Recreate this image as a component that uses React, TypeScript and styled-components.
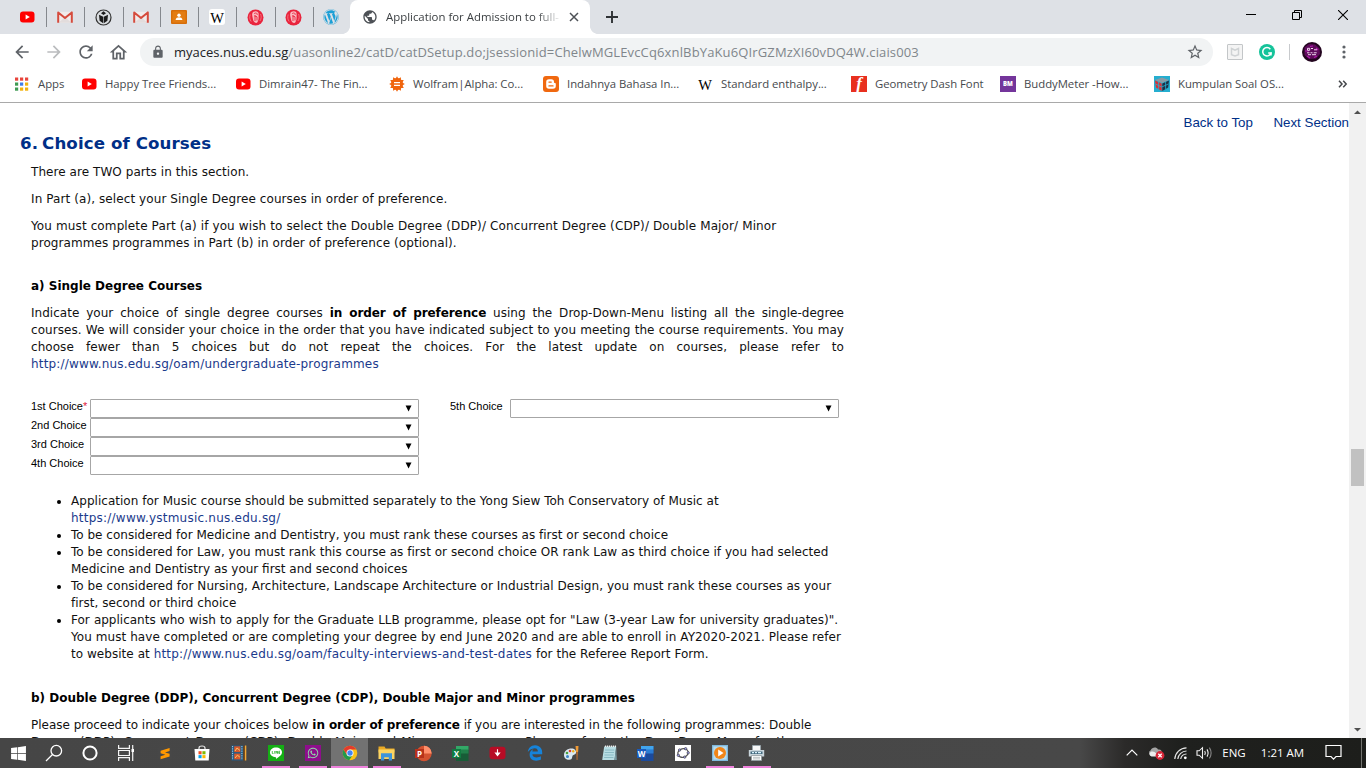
import React from 'react';
import styled, { createGlobalStyle, css } from 'styled-components';
import { MdArrowBack, MdArrowForward, MdRefresh, MdOutlineHome, MdLock, MdStarBorder, MdPublic } from 'react-icons/md';
import { FaWordpress, FaWhatsapp, FaWindows } from 'react-icons/fa';
import { FaEdgeLegacy } from 'react-icons/fa6';

const GlobalStyle = createGlobalStyle`
  html, body { margin: 0; padding: 0; background: #fff; overflow: hidden; }
  * { box-sizing: border-box; }
`;

const ui = '"Segoe UI", "Open Sans", sans-serif';

const Screen = styled.div`
  width: 1366px;
  height: 768px;
  display: flex;
  flex-direction: column;
  overflow: hidden;
  font-family: ${ui};
`;

/* ---------- browser chrome ---------- */

const TabStrip = styled.div`
  height: 34px;
  flex: none;
  display: flex;
  padding-left: 8px;
  background: #dee1e6;
`;

const PinnedTab = styled.div<{ $last?: boolean }>`
  width: 38px;
  height: 34px;
  display: flex;
  align-items: center;
  justify-content: center;
  &::after {
    content: '';
    width: 1px;
    height: 20px;
    margin-left: 11px;
    margin-right: -2px;
    background: ${p => (p.$last ? 'transparent' : '#85888d')};
  }
  svg { flex: none; margin-left: 10px; }
`;

const ActiveTab = styled.div`
  width: 240px;
  height: 34px;
  display: flex;
  align-items: center;
  padding-left: 12px;
  background: #fff;
  border-radius: 8px 8px 0 0;
`;

const TabFlare = styled.div<{ $side: 'left' | 'right' }>`
  width: 8px;
  height: 8px;
  align-self: flex-end;
  margin-left: ${p => (p.$side === 'left' ? '-8px' : '0')};
  background: radial-gradient(circle at ${p => (p.$side === 'left' ? '0 0' : '100% 0')}, transparent 7.6px, #fff 8.2px);
`;

const TabTitle = styled.div`
  width: 174px;
  margin-left: 8px;
  margin-right: 5px;
  white-space: nowrap;
  font-size: 11.4px;
  line-height: 18px;
  color: #3c4043;
  mask-image: linear-gradient(to right, #000 150px, transparent 176px);
`;

const NewTab = styled.div`
  width: 28px;
  display: flex;
  align-items: center;
  justify-content: center;
`;

const WindowControls = styled.div`
  display: flex;
  height: 29px;
  margin-left: auto;
`;

const WindowButton = styled.div`
  width: 46px;
  display: flex;
  align-items: center;
  justify-content: center;
`;

const Toolbar = styled.div`
  height: 37px;
  flex: none;
  display: flex;
  align-items: center;
  padding: 0 0 1px 6px;
  background: #fff;
  color: #5f6368;
`;

const ToolButton = styled.div<{ $w: number; $color?: string }>`
  width: ${p => p.$w}px;
  height: 28px;
  flex: none;
  display: flex;
  align-items: center;
  justify-content: center;
  color: ${p => p.$color ?? '#5f6368'};
`;

const AddressBar = styled.div`
  width: 1073px;
  height: 28px;
  flex: none;
  display: flex;
  align-items: center;
  padding: 0 9px 0 11px;
  margin-left: 6px;
  background: #f1f3f4;
  border-radius: 14px;
`;

const Url = styled.div`
  flex: 1;
  margin-left: 9px;
  font-size: 13px;
  line-height: 20px;
  color: #80868b;
  white-space: nowrap;
  letter-spacing: 0.14px;
`;

const Host = styled.span`
  color: #202124;
  letter-spacing: 0;
`;

const Divider = styled.div`
  width: 1px;
  height: 16px;
  margin: 0 12px 0 7px;
  background: #c8cacd;
`;

const BookmarkBar = styled.div`
  height: 32px;
  flex: none;
  display: flex;
  padding-left: 14px;
  padding-bottom: 6px;
  background: #fff;
  border-bottom: 1px solid #a9a9a9;
`;

const Bookmark = styled.div<{ $w: number }>`
  width: ${p => p.$w}px;
  display: flex;
  align-items: center;
  gap: 8px;
  font-size: 11.35px;
  letter-spacing: -0.03px;
  color: #46494d;
  white-space: nowrap;
  svg { flex: none; }
`;

const Overflow = styled.div`
  margin-left: auto;
  width: 34px;
  display: flex;
  align-items: center;
  padding-left: 1px;
`;

/* ---------- page ---------- */

const Viewport = styled.div`
  flex: 1;
  min-height: 0;
  display: flex;
  background: #fff;
`;

const Page = styled.main`
  flex: 1;
  overflow: hidden;
  font: 12px/17px Verdana, "DejaVu Sans", sans-serif;
  color: #111;
`;

const TopLinks = styled.nav`
  display: flex;
  justify-content: flex-end;
  gap: 20.5px;
  padding-top: 11px;
  font: 13.33px/17px Arial, "Liberation Sans", sans-serif;
  color: #002f87;
`;

const SectionTitle = styled.h2`
  display: flex;
  gap: 4px;
  margin: 3px 0 10px 20px;
  font-size: 16.65px;
  line-height: 20px;
  font-weight: bold;
  letter-spacing: 0.1px;
  color: #002f87;
`;

const Body = styled.div`
  width: 813px;
  margin-left: 31px;
`;

const Paragraph = styled.p`
  margin: 0 0 10px;
`;

const SubTitle = styled.h3`
  margin: 26px 0 10px;
  font-size: 12px;
  line-height: 17px;
  color: #000;
`;

const Line = styled.span<{ $ls?: number; $justify?: number }>`
  display: block;
  white-space: nowrap;
  letter-spacing: ${p => p.$ls ?? 0}px;
  ${p => p.$justify && css`
    width: ${p.$justify}px;
    text-align: justify;
    text-align-last: justify;
  `}
`;

const Strong = styled.b`
  color: #000;
  letter-spacing: -0.08px;
`;

const Link = styled.span<{ $ls?: number }>`
  color: #1b3a8c;
  letter-spacing: ${p => p.$ls ?? 0.17}px;
`;

const Choices = styled.div`
  display: flex;
  gap: 31px;
  margin: 26px 0 17px;
  font: 11px/15px Arial, "Liberation Sans", sans-serif;
  color: #000;
`;

const ChoiceRow = styled.label`
  height: 19px;
  display: flex;
`;

const ChoiceLabel = styled.span<{ $w: number }>`
  width: ${p => p.$w}px;
  white-space: nowrap;
`;

const Required = styled.span`
  color: #e0203c;
`;

const SelectBox = styled.span`
  width: 329px;
  height: 19px;
  display: flex;
  align-items: center;
  justify-content: flex-end;
  padding-right: 6px;
  border: 1px solid #a6a6a6;
  border-radius: 1px;
  background: #fff;
`;

const Notes = styled.ul`
  margin: 0 0 27px;
  padding: 1px 0 0 40px;
`;

const Note = styled.li`
  margin: 0;
  &::marker { color: #000; }
`;

const ScrollBar = styled.div`
  width: 17px;
  display: flex;
  flex-direction: column;
  align-items: center;
  background: #f1f1f1;
`;

const ScrollArrow = styled.div<{ $down?: boolean }>`
  height: 17px;
  display: flex;
  align-items: center;
  margin-top: ${p => (p.$down ? 'auto' : '0')};
`;

const ScrollThumb = styled.div`
  width: 13px;
  height: 37px;
  margin-top: 329px;
  background: #c1c1c1;
`;

/* ---------- taskbar ---------- */

const TaskBar = styled.footer`
  height: 30px;
  flex: none;
  display: flex;
  background: linear-gradient(to right, #464646 0, #484848 1080px, #2b2a29 1125px, #1f201e 1180px, #1d1e1b 100%);
  color: #fff;
`;

const SystemItem = styled.div`
  width: 36px;
  height: 30px;
  display: flex;
  align-items: center;
  justify-content: center;
`;

const TaskItem = styled.div<{ $state?: 'open' | 'active' }>`
  width: 37px;
  height: 30px;
  display: flex;
  align-items: center;
  justify-content: center;
  background:
    linear-gradient(#ee82dc, #ee82dc) center bottom / ${p => (p.$state === 'active' ? '37px' : p.$state ? '28px' : '0')} 2px no-repeat,
    ${p => (p.$state === 'active' ? '#727272' : 'transparent')};
`;

const Apps = styled.div`
  display: flex;
  margin-left: 2px;
`;

const Tray = styled.div`
  flex: 1;
  display: flex;
  align-items: center;
  padding-left: 353px;
  margin-left: -7px;
  padding-bottom: 1px;
  font-size: 11.5px;
`;

const TrayItem = styled.div<{ $w: number }>`
  width: ${p => p.$w}px;
  height: 28px;
  display: flex;
  align-items: center;
  justify-content: center;
  white-space: nowrap;
`;

const ShowDesktop = styled.div`
  width: 5px;
  height: 30px;
  border-left: 1px solid #72736f;
`;

/* ---------- icons ---------- */

const YouTube = () => (
  <svg width="16" height="16" viewBox="0 0 16 16">
    <rect x="1" y="2.6" width="14.5" height="11" rx="3" fill="#f00" />
    <path d="M6.6 5.6v5l4.2-2.5z" fill="#fff" />
  </svg>
);

const Gmail = () => (
  <svg width="16" height="16" viewBox="0 0 16 16">
    <rect x="1.5" y="2.8" width="13" height="11" fill="#f1ecec" />
    <path d="M1.5 13.8 8 8l6.5 5.8z" fill="#e2dcdc" />
    <path d="M1.2 13.8V3.4L8 9l6.8-5.6v10.4" fill="none" stroke="#d54b3d" strokeWidth="2" strokeLinejoin="round" />
  </svg>
);

const Crest = () => (
  <svg width="17" height="17" viewBox="0 0 17 17">
    <circle cx="8.5" cy="8.5" r="7.5" fill="#d9dcdf" stroke="#333" strokeWidth="1.2" />
    <path d="M8.5 2.300 11 4.300 8.500 6 6 4.300zM4 5.800l4.200 2v6.400L4.600 11.800zM13 5.800 8.800 7.800v6.400l3.600-2.400z" fill="#1c1c1c" />
  </svg>
);

const Classroom = () => (
  <svg width="16" height="16" viewBox="0 0 16 16">
    <rect y="1" width="16" height="14" rx="1" fill="#d66d0a" />
    <rect x="1.4" y="2.4" width="13.2" height="11.2" fill="#e37c13" />
    <circle cx="8" cy="6.2" r="1.7" fill="#fff" />
    <path d="M4.6 11c0-2 2-2.7 3.4-2.7s3.4.7 3.4 2.7z" fill="#fff" />
  </svg>
);

const WikiText = styled.span<{ $tile?: boolean }>`
  width: 16px;
  height: 16px;
  flex: none;
  margin-left: ${p => (p.$tile ? '10px' : '0')};
  padding-top: 2px;
  display: flex;
  align-items: center;
  justify-content: center;
  font: 14.5px/14px "Liberation Serif", serif;
  color: #000;
  border-radius: 3px;
  background: ${p => (p.$tile ? '#fff' : 'transparent')};
`;

const RedSeal = () => (
  <svg width="17" height="17" viewBox="0 0 17 17">
    <circle cx="8.5" cy="8.5" r="8" fill="#e9243d" />
    <path d="M6 3c3-1.8 6-.6 5.6 2.3-.2 2 .6 5-1.2 8C9 15 6.3 13 6 10.500S4.200 5 6 3z" fill="#f9b9bf" />
    <path d="M7.200 4.500c1.800-1 3.400-.4 3 1.400M7.500 7l2.600.7M8 6v6m2-4v3.500" fill="none" stroke="#e9243d" strokeWidth=".9" />
    <path d="M3.200 5.500c-.8 2.500-.6 5 1 7M13.600 5c.9 2.500.8 4.800-.7 7" fill="none" stroke="#f5858f" strokeWidth=".8" />
  </svg>
);

const AppsGrid = () => (
  <svg width="16" height="16" viewBox="0 0 16 16">
    {['#e8453c', '#e8453c', '#e8453c', '#3f9b53', '#3f7de8', '#f2b20d', '#3f9b53', '#f2b20d', '#f2b20d'].map((c, i) => (
      <rect key={i} x={1 + (i % 3) * 5} y={1.5 + Math.floor(i / 3) * 5} width="3.2" height="3.2" fill={c} />
    ))}
  </svg>
);

const Wolfram = () => (
  <svg width="16" height="16" viewBox="0 0 16 16">
    <g fill="#f0650e">
      <circle cx="8" cy="8" r="5.900" />
      {Array.from({ length: 12 }, (_, i) => (
        <path key={i} d="M6.200 3.200 8 .2l1.800 3z" transform={`rotate(${i * 30} 8 8)`} />
      ))}
    </g>
    <path d="M5 6.700h6M5 9.300h6" stroke="#fff" strokeWidth="1.300" />
  </svg>
);

const Blogger = () => (
  <svg width="16" height="16" viewBox="0 0 16 16">
    <rect width="16" height="16" rx="3" fill="#f0680f" />
    <path d="M6 3.200h2.300A2.700 2.700 0 0 1 11 5.900c0 .8.3 1 .9 1 .6 0 .9.3.9.9V10a2.800 2.800 0 0 1-2.800 2.800H6A2.800 2.800 0 0 1 3.200 10V6A2.800 2.800 0 0 1 6 3.200z" fill="#fff" />
    <path d="M6 6.100h2.200M6 9.900h4" stroke="#f0680f" strokeWidth="1.400" strokeLinecap="round" />
  </svg>
);

const IconTile = styled.span<{ $bg: string; $font: string }>`
  width: 16px;
  height: 16px;
  flex: none;
  display: flex;
  align-items: center;
  justify-content: center;
  background: ${p => p.$bg};
  color: #fff;
  font: ${p => p.$font};
`;

const Cube = () => (
  <svg width="16" height="16" viewBox="0 0 16 16">
    <rect width="16" height="16" fill="#25aed0" />
    <path d="m1 4 7-2.500L15 4 8 7z" fill="#8a9aa4" />
    <path d="m1 4.500 6.700 3V15L2 11.500z" fill="#d92f36" />
    <path d="m15 4.500-6.700 3V15l5.900-3.500z" fill="#1f2f45" />
    <path d="m1.500 8 6.200 3 6.700-3M4.600 6v7.200M11.600 6v7.200" stroke="#25aed0" strokeWidth=".8" fill="none" />
  </svg>
);

const Shield = () => (
  <svg width="16" height="16" viewBox="0 0 16 16">
    <rect x=".5" y=".5" width="15" height="15" rx=".5" fill="#f4f4f4" stroke="#c3c6c8" />
    <path d="M4.500 4.500v6.300L8 12l3.500-1.200V4.500L8 6.200z" fill="none" stroke="#cfd2d4" strokeWidth="1.500" />
  </svg>
);

const Grammarly = () => (
  <svg width="16" height="16" viewBox="0 0 16 16">
    <circle cx="8" cy="8" r="8" fill="#15c39a" />
    <path d="M11.300 5.200A4.200 4.200 0 1 0 12 9H9.200" fill="none" stroke="#fff" strokeWidth="1.500" />
    <path d="M12 8.400v3" stroke="#fff" strokeWidth="1.400" />
  </svg>
);

const Avatar = () => (
  <svg width="20" height="20" viewBox="0 0 20 20">
    <circle cx="10" cy="10" r="10" fill="#23051f" />
    <path d="M2.500 5.500 7 2l6 .5 4.500 4L18 12l-4 4.500-7 .5-4.500-4z" fill="#5e0b5b" />
    <path d="M3 9h4m7-3 2 2M8 4.500l3-.5M5 14l3 2m4-.5 3-1.500" stroke="#b01bab" strokeWidth="1.200" />
    <path d="M5.500 6.300h2.200v2H5.500zM9 6.500h2m1 1.300h3M5 10.800h2.500m1 0h2m1.200 0h3M6 12.700h3m1 0h4" stroke="#f1d6f0" strokeWidth="1" fill="none" />
  </svg>
);

const Search = () => (
  <svg width="18" height="18" viewBox="0 0 18 18" fill="none" stroke="#fff" strokeWidth="1.300">
    <circle cx="11.300" cy="6.700" r="5.300" /><path d="m7.500 10.500-6.500 6.500" />
  </svg>
);

const TaskView = () => (
  <svg width="18" height="18" viewBox="0 0 18 18" fill="none" stroke="#f4f4f4" strokeWidth="1.200">
    <path d="M1.600 1v3.400h10.800V1M1.600 17v-3.400h10.800V17M1.600 6.500h10.800v5H1.600zM15.700 1v16" />
    <rect x="14.500" y="5" width="2.500" height="3" fill="#fff" stroke="none" />
  </svg>
);

const Sublime = () => (
  <svg width="16" height="16" viewBox="0 0 16 16">
    <rect x="1" y="1" width="14" height="14" rx="2" fill="#474747" />
    <path d="m3.600 5.700 9-2.800v3L8 7.400l4.600 1.300v2.700l-9 2.900v-3l4.800-1.500-4.800-1.500z" fill="#ff9800" />
  </svg>
);

const Store = () => (
  <svg width="16" height="16" viewBox="0 0 16 16">
    <path d="M5 4.500V3q0-2 3-2t3 2v1.500" fill="none" stroke="#e8e8e8" strokeWidth="1.200" />
    <path d="M.5 4h15l-.8 11.500H1.300z" fill="#fff" />
    <path d="M4.500 6.200h3.100v3.100H4.500z" fill="#f25022" /><path d="M8.400 6.200h3.100v3.100H8.400z" fill="#7fba00" />
    <path d="M4.500 10.100h3.100v3.100H4.500z" fill="#00a4ef" /><path d="M8.400 10.100h3.100v3.100H8.400z" fill="#ffb900" />
  </svg>
);

const FilmStrip = () => (
  <svg width="16" height="16" viewBox="0 0 16 16">
    <rect x=".5" y=".5" width="11.500" height="15" fill="#245b86" />
    <path d="M1.600 1v14M10.900 1v14" stroke="#a8d3ea" strokeWidth="1" strokeDasharray="1.200 1.100" />
    <rect x="3.200" y="1.300" width="6.200" height="5.800" fill="#d8582b" /><rect x="3.200" y="8.600" width="6.200" height="5.800" fill="#d8582b" />
    <path d="m4 6 2-3 3 2.500M4 13l2.400-2.800 2.500 2" stroke="#f7c56b" fill="none" />
    <path d="M13.200 1v14.500" stroke="#76440e" strokeWidth="1.200" /><path d="M14.600.5v15" stroke="#f0a93a" strokeWidth="1.400" />
  </svg>
);

const LineApp = () => (
  <svg width="16" height="16" viewBox="0 0 16 16">
    <rect width="16" height="16" fill="#14ae14" />
    <path d="M8 2.600c3.300 0 6 2.100 6 4.800 0 2.200-2.600 4.300-6 6.500.2-1 .3-1.600-.3-1.700C4.500 11.900 2 9.900 2 7.400c0-2.700 2.700-4.800 6-4.800z" fill="#fff" />
    <path d="M4.300 6v2.500h1.200M6.700 6v2.700M8 8.700V6l1.500 2.500V6M12 6.300h-1.200v2.200H12M10.800 7.400H12" fill="none" stroke="#14ae14" strokeWidth=".7" />
  </svg>
);

const Glyph = styled.span<{ $bg: string }>`
  width: 16px;
  height: 16px;
  display: flex;
  align-items: center;
  justify-content: center;
  background: ${p => p.$bg};
`;

const Chrome = () => (
  <svg width="16" height="16" viewBox="0 0 16 16">
    <circle cx="8" cy="8" r="7.300" fill="#fbc116" />
    <path d="M1.600 4.500A7.300 7.300 0 0 1 14.400 4.500H8z" fill="#e33b2e" />
    <path d="M1.600 4.400A7.300 7.300 0 0 0 7.200 15.250L10.800 10 4.800 9.500z" fill="#229a4b" />
    <path d="M1.600 4.500 3.600 2.500 8 4.500 5 9.800z" fill="#e33b2e" />
    <circle cx="8" cy="8" r="3.500" fill="#fff" /><circle cx="8" cy="8" r="2.700" fill="#4285f4" />
  </svg>
);

const Explorer = () => (
  <svg width="17" height="16" viewBox="0 0 17 16">
    <path d="M.5 1.500h6l1.200 2h8.800v4H.5z" fill="#e9a924" />
    <path d="M.5 4.500h16V14H.5z" fill="#fcd462" />
    <path d="M3 15.500V8.300h11v7.200h-3.200v-3.300H6.200v3.300z" fill="#3e94da" />
  </svg>
);

const OfficeBadge = styled.span<{ $bg: string }>`
  position: absolute;
  left: 0;
  top: 4px;
  width: 9px;
  height: 9px;
  background: ${p => p.$bg};
  color: #fff;
  font: bold 8px/9px "Open Sans", sans-serif;
  text-align: center;
`;

const OfficeWrap = styled.span`
  position: relative;
  width: 17px;
  height: 17px;
`;

const Office = ({ letter, colors, round }: { letter: string; colors: string[]; round?: boolean }) => (
  <OfficeWrap>
    <svg width="17" height="17" viewBox="0 0 17 17">
      {round ? (
        <><circle cx="9" cy="8.500" r="7.700" fill={colors[0]} /><path d="M9 .8a7.700 7.700 0 0 1 7.700 7.700H9z" fill={colors[1]} /></>
      ) : (
        <><path d="M4 1h12.500v15H4z" fill={colors[0]} /><path d="M4 1h12.500v3.800H4z" fill={colors[1]} /><path d="M4 4.800h12.500v3.700H4z" fill={colors[3]} /></>
      )}
    </svg>
    <OfficeBadge $bg={colors[2]}>{letter}</OfficeBadge>
  </OfficeWrap>
);

const Download = () => (
  <svg width="17" height="16" viewBox="0 0 17 16">
    <rect x=".5" y="1.800" width="16" height="12.500" rx="3" fill="#b80c25" />
    <path d="M8.500 4.300v5M6.500 8l2 2.500L10.500 8z" fill="#fff" stroke="#fff" strokeWidth="1.100" />
  </svg>
);

const Paint = () => (
  <svg width="17" height="16" viewBox="0 0 17 16">
    <path d="M1 10c0-4 3.500-6.500 7.500-6.500 3 0 5 1.800 4.500 4.500-.4 1.800-2.500 1.500-3.300 2.500-.8 1.300 0 4-3.200 4.300C3.200 15 1 12.800 1 10z" fill="#dbe9f2" />
    <circle cx="4" cy="8" r="1.300" fill="#4da13f" /><circle cx="7" cy="6" r="1.300" fill="#e0402d" /><circle cx="10.200" cy="6.300" r="1.200" fill="#f2b31c" />
    <circle cx="4.500" cy="11.500" r="1.500" fill="#3b84c7" />
    <path d="M12.500 1h3l-.4 6h-2z" fill="#ee9a36" /><path d="M13.300 7h1.600l-.4 8h-.9z" fill="#c06a2b" />
  </svg>
);

const Notepad = () => (
  <svg width="16" height="16" viewBox="0 0 16 16">
    <path d="M3.200 1.500h12L13.500 15H1.200z" fill="#b8dde3" /><path d="m15.200 1.500.6 13.500h-2.300z" fill="#779ba4" />
    <path d="M4 5h9.300M3.700 7.500H13M3.400 10h9.300M3.100 12.500h9.300" stroke="#7fb2bd" strokeWidth=".8" />
    <path d="M4 1.300h11" stroke="#eee" strokeWidth="1.600" strokeDasharray="1.200 .8" />
  </svg>
);

const GeoGebra = () => (
  <svg width="16" height="16" viewBox="0 0 16 16">
    <rect width="16" height="16" fill="#fff" />
    <ellipse cx="8" cy="8" rx="5.300" ry="4.200" transform="rotate(-15 8 8)" fill="none" stroke="#555" strokeWidth="1.200" />
    <g fill="#9e9ee8" stroke="#333" strokeWidth=".6">
      <circle cx="4.600" cy="5" r="1.200" /><circle cx="10.600" cy="3.700" r="1.200" /><circle cx="13.200" cy="7.800" r="1.200" /><circle cx="9.700" cy="12.100" r="1.200" /><circle cx="3.300" cy="10.300" r="1.200" />
    </g>
  </svg>
);

const MediaPlayer = () => (
  <svg width="16" height="16" viewBox="0 0 16 16">
    <rect width="16" height="16" fill="#7fb9dd" /><rect x="1.300" y="1.300" width="13.400" height="13.400" fill="#b6dcf0" />
    <circle cx="8" cy="8" r="6" fill="#f08518" /><path d="M6.200 4.600v6.800L11.500 8z" fill="#fff" />
  </svg>
);

const Printer = () => (
  <svg width="17" height="16" viewBox="0 0 17 16">
    <path d="M4.500.5h8v5h-8z" fill="#f7f7f7" stroke="#9ba8b0" strokeWidth=".8" />
    <path d="M.8 5h15.400v6.500H.8z" fill="#c9d5db" /><path d="M2.500 6.500h12V9h-12z" fill="#456b80" />
    <path d="M4 7.700h2m1 0h2m1 0h3" stroke="#d8f0fa" strokeWidth="1.200" />
    <path d="M3.500 10.500h10v5h-10z" fill="#fff" stroke="#8f9aa0" strokeWidth=".8" /><path d="M5 12.300h7M5 13.900h7" stroke="#a5adb1" strokeWidth=".8" />
  </svg>
);

const SelectArrow = () => (
  <svg width="7" height="7" viewBox="0 0 7 7"><path d="M.6.500h5.900L3.550 6.500z" fill="#000" /></svg>
);

const BOOKMARKS: { icon: React.ReactNode; label: string; w: number }[] = [
  { icon: <AppsGrid />, label: 'Apps', w: 67 },
  { icon: <YouTube />, label: 'Happy Tree Friends...', w: 154 },
  { icon: <YouTube />, label: 'Dimrain47- The Fin...', w: 154 },
  { icon: <Wolfram />, label: 'Wolfram|Alpha: Co...', w: 154 },
  { icon: <Blogger />, label: 'Indahnya Bahasa In...', w: 154 },
  { icon: <WikiText>W</WikiText>, label: 'Standard enthalpy...', w: 154 },
  { icon: <IconTile $bg="#e8301f" $font={'italic bold 17px/14px "Liberation Serif", serif'}>f</IconTile>, label: 'Geometry Dash Font', w: 149 },
  { icon: <IconTile $bg="#74359b" $font={'900 6px/16px "Open Sans", sans-serif'}>BM</IconTile>, label: 'BuddyMeter -How...', w: 154 },
  { icon: <Cube />, label: 'Kumpulan Soal OS...', w: 150 },
];

const Choice = ({ label, w, required }: { label: string; w: number; required?: boolean }) => (
  <ChoiceRow>
    <ChoiceLabel $w={w}>{label}{required && <Required>*</Required>}</ChoiceLabel>
    <SelectBox><SelectArrow /></SelectBox>
  </ChoiceRow>
);

export default function App() {
  return (
    <Screen>
      <GlobalStyle />
      <TabStrip>
        <PinnedTab><YouTube /></PinnedTab>
        <PinnedTab><Gmail /></PinnedTab>
        <PinnedTab><Crest /></PinnedTab>
        <PinnedTab><Gmail /></PinnedTab>
        <PinnedTab><Classroom /></PinnedTab>
        <PinnedTab><WikiText $tile>W</WikiText></PinnedTab>
        <PinnedTab><RedSeal /></PinnedTab>
        <PinnedTab><RedSeal /></PinnedTab>
        <PinnedTab $last><FaWordpress size={16} color="#1c9fd6" /></PinnedTab>
        <TabFlare $side="left" />
        <ActiveTab>
          <MdPublic size={16} color="#4d5156" />
          <TabTitle>Application for Admission to full-</TabTitle>
          <svg width="18" height="18" viewBox="0 0 18 18"><path d="m5 5 8 8m0-8-8 8" stroke="#4d5156" strokeWidth="1.500" /></svg>
        </ActiveTab>
        <TabFlare $side="right" />
        <NewTab>
          <svg width="14" height="14" viewBox="0 0 14 14"><path d="M7 1v12M1 7h12" stroke="#2f3235" strokeWidth="1.900" /></svg>
        </NewTab>
        <WindowControls>
          <WindowButton><svg width="10" height="10"><path d="M0 4.500h10" stroke="#000" /></svg></WindowButton>
          <WindowButton><svg width="10" height="10" fill="none" stroke="#000"><path d="M.5 2.500h7v7h-7zM2.500 2.500v-2h7v7h-2" /></svg></WindowButton>
          <WindowButton><svg width="10" height="10"><path d="m0 0 10 10M10 0 0 10" stroke="#000" strokeWidth="1.100" /></svg></WindowButton>
        </WindowControls>
      </TabStrip>

      <Toolbar>
        <ToolButton $w={32}><MdArrowBack size={20} /></ToolButton>
        <ToolButton $w={32} $color="#babcbe"><MdArrowForward size={20} /></ToolButton>
        <ToolButton $w={32}><MdRefresh size={20} /></ToolButton>
        <ToolButton $w={32}><MdOutlineHome size={21} /></ToolButton>
        <AddressBar>
          <MdLock size={14} />
          <Url><Host>myaces.nus.edu.sg</Host>/uasonline2/catD/catDSetup.do;jsessionid=ChelwMGLEvcCq6xnlBbYaKu6QIrGZMzXI60vDQ4W.ciais003</Url>
          <MdStarBorder size={18} />
        </AddressBar>
        <ToolButton $w={44}><Shield /></ToolButton>
        <ToolButton $w={20}><Grammarly /></ToolButton>
        <ToolButton $w={5} />
        <Divider />
        <ToolButton $w={20}><Avatar /></ToolButton>
        <ToolButton $w={44}>
          <svg width="4" height="14" viewBox="0 0 4 14" fill="#5f6368"><circle cx="2" cy="2" r="1.600" /><circle cx="2" cy="7" r="1.600" /><circle cx="2" cy="12" r="1.600" /></svg>
        </ToolButton>
      </Toolbar>

      <BookmarkBar>
        {BOOKMARKS.map(b => <Bookmark key={b.label} $w={b.w}>{b.icon}{b.label}</Bookmark>)}
        <Overflow>
          <svg width="20" height="8" viewBox="0 0 20 8" fill="none" stroke="#44474b" strokeWidth="1.500"><path d="m6 .8 3 3.200-3 3.200M10.200.8l3 3.200-3 3.200" /></svg>
        </Overflow>
      </BookmarkBar>

      <Viewport>
        <Page>
          <TopLinks><span>Back to Top</span><span>Next Section</span></TopLinks>
          <SectionTitle><span>6.</span><span>Choice of Courses</span></SectionTitle>
          <Body>
            <Paragraph><Line $ls={0.06}>There are TWO parts in this section.</Line></Paragraph>
            <Paragraph><Line $ls={0.09}>In Part (a), select your Single Degree courses in order of preference.</Line></Paragraph>
            <Paragraph>
              <Line $ls={0.12}>You must complete Part (a) if you wish to select the Double Degree (DDP)/ Concurrent Degree (CDP)/ Double Major/ Minor</Line>
              <Line $ls={0.08}>programmes programmes in Part (b) in order of preference (optional).</Line>
            </Paragraph>
            <SubTitle>a) Single Degree Courses</SubTitle>
            <Paragraph>
              <Line $ls={0.03} $justify={813}>Indicate your choice of single degree courses <Strong>in order of preference</Strong> using the Drop-Down-Menu listing all the single-degree</Line>
              <Line $ls={0.05} $justify={813}>courses. We will consider your choice in the order that you have indicated subject to you meeting the course requirements. You may</Line>
              <Line $ls={0.05} $justify={813}>choose fewer than 5 choices but do not repeat the choices. For the latest update on courses, please refer to</Line>
              <Line><Link>http://www.nus.edu.sg/oam/undergraduate-programmes</Link></Line>
            </Paragraph>
            <Choices>
              <div>
                <Choice label="1st Choice" w={59} required />
                <Choice label="2nd Choice" w={59} />
                <Choice label="3rd Choice" w={59} />
                <Choice label="4th Choice" w={59} />
              </div>
              <div>
                <Choice label="5th Choice" w={60} />
              </div>
            </Choices>
            <Notes>
              <Note>
                <Line $ls={0.03}>Application for Music course should be submitted separately to the Yong Siew Toh Conservatory of Music at</Line>
                <Line><Link $ls={0.23}>https://www.ystmusic.nus.edu.sg/</Link></Line>
              </Note>
              <Note><Line $ls={0.01}>To be considered for Medicine and Dentistry, you must rank these courses as first or second choice</Line></Note>
              <Note>
                <Line $ls={0.035}>To be considered for Law, you must rank this course as first or second choice OR rank Law as third choice if you had selected</Line>
                <Line>Medicine and Dentistry as your first and second choices</Line>
              </Note>
              <Note>
                <Line $ls={0.055}>To be considered for Nursing, Architecture, Landscape Architecture or Industrial Design, you must rank these courses as your</Line>
                <Line $ls={0.03}>first, second or third choice</Line>
              </Note>
              <Note>
                <Line $justify={767}>For applicants who wish to apply for the Graduate LLB programme, please opt for "Law (3-year Law for university graduates)".</Line>
                <Line $ls={0.067}>You must have completed or are completing your degree by end June 2020 and are able to enroll in AY2020-2021. Please refer</Line>
                <Line $ls={0.045}>to website at <Link $ls={0.18}>http://www.nus.edu.sg/oam/faculty-interviews-and-test-dates</Link> for the Referee Report Form.</Line>
              </Note>
            </Notes>
            <SubTitle>b) Double Degree (DDP), Concurrent Degree (CDP), Double Major and Minor programmes</SubTitle>
            <Paragraph>
              <Line $ls={-0.01}>Please proceed to indicate your choices below <Strong>in order of preference</Strong> if you are interested in the following programmes: Double</Line>
              <Line $justify={765}>Degree (DDP), Concurrent Degree (CDP), Double Major and Minor programmes. Please refer to the Drop-Down-Menu for the</Line>
            </Paragraph>
          </Body>
        </Page>
        <ScrollBar>
          <ScrollArrow><svg width="7" height="4"><path d="M0 4h7L3.500.500z" fill="#505050" /></svg></ScrollArrow>
          <ScrollThumb />
          <ScrollArrow $down><svg width="7" height="4"><path d="M0 0h7L3.500 3.500z" fill="#505050" /></svg></ScrollArrow>
        </ScrollBar>
      </Viewport>

      <TaskBar>
        <SystemItem><FaWindows size={17} /></SystemItem>
        <SystemItem><Search /></SystemItem>
        <SystemItem><svg width="16" height="16" viewBox="0 0 16 16"><circle cx="8" cy="8" r="6.600" fill="none" stroke="#fff" strokeWidth="2" /></svg></SystemItem>
        <SystemItem><TaskView /></SystemItem>
        <Apps>
          <TaskItem><Sublime /></TaskItem>
          <TaskItem><Store /></TaskItem>
          <TaskItem><FilmStrip /></TaskItem>
          <TaskItem $state="open"><LineApp /></TaskItem>
          <TaskItem $state="open"><Glyph $bg="#8e0e8c"><FaWhatsapp size={12} color="#8fe0a8" /></Glyph></TaskItem>
          <TaskItem $state="active"><Chrome /></TaskItem>
          <TaskItem $state="open"><Explorer /></TaskItem>
          <TaskItem><Office letter="P" colors={['#d35230', '#ff8f6b', '#b7311a', '']} round /></TaskItem>
          <TaskItem><Office letter="X" colors={['#185c37', '#33a867', '#107c41', '#21804a']} /></TaskItem>
          <TaskItem><Download /></TaskItem>
          <TaskItem><FaEdgeLegacy size={16} color="#1683d9" /></TaskItem>
          <TaskItem><Paint /></TaskItem>
          <TaskItem><Notepad /></TaskItem>
          <TaskItem><Office letter="W" colors={['#1b4a9c', '#41a5ee', '#185abd', '#2b7cd3']} /></TaskItem>
          <TaskItem><GeoGebra /></TaskItem>
          <TaskItem $state="open"><MediaPlayer /></TaskItem>
          <TaskItem $state="open"><Printer /></TaskItem>
        </Apps>
        <Tray>
          <TrayItem $w={22}><svg width="12" height="7" viewBox="0 0 12 7"><path d="m.7 6.300 5.300-5.300 5.300 5.300" fill="none" stroke="#fff" strokeWidth="1.200" /></svg></TrayItem>
          <TrayItem $w={26}>
            <svg width="17" height="16" viewBox="0 0 17 16">
              <path d="M3.500 11a3 3 0 0 1-.8-5.700C4 2 8.500 1.500 10 4.500c3-.5 4 1.500 3.500 3.500L12 11z" fill="#a5a5a5" /><path d="M3.500 11.500a2.600 2.600 0 0 1 0-5c2-.4 3 .3 5 2v3z" fill="#ededed" />
              <circle cx="12" cy="10.500" r="4.400" fill="#d72638" /><path d="m10.300 8.800 3.400 3.400m0-3.400-3.400 3.400" stroke="#fff" strokeWidth="1.300" />
            </svg>
          </TrayItem>
          <TrayItem $w={24}>
            <svg width="14" height="14" viewBox="0 0 14 14" fill="none" stroke="#e6e6e6" strokeWidth="1.200">
              <path d="M.8 13A12 12 0 0 1 12.500 1.800M3.800 13A9 9 0 0 1 12.500 5M6.700 13a6 6 0 0 1 5.800-5" /><circle cx="11.300" cy="11.800" r="1.400" fill="#fff" stroke="none" />
            </svg>
          </TrayItem>
          <TrayItem $w={22}>
            <svg width="17" height="14" viewBox="0 0 17 14" fill="none" stroke="#f1f1f1" strokeWidth="1.100">
              <path d="M1 4.800h2.200L6.500 1.700v10.600L3.200 9.200H1z" /><path d="M8.700 5q1.300 2 0 4M11 3.400q2.200 3.600 0 7.200" /><path d="M13.400 1.600q3.400 5.400 0 10.800" stroke="#888" />
            </svg>
          </TrayItem>
          <TrayItem $w={38}>ENG</TrayItem>
          <TrayItem $w={59}>1:21 AM</TrayItem>
          <TrayItem $w={42}><svg width="17" height="17" viewBox="0 0 17 17"><path d="M1 1.500h15v11h-5l-2.500 2.700L6 12.500H1z" fill="none" stroke="#fff" strokeWidth="1.200" /></svg></TrayItem>
        </Tray>
        <ShowDesktop />
      </TaskBar>
    </Screen>
  );
}
